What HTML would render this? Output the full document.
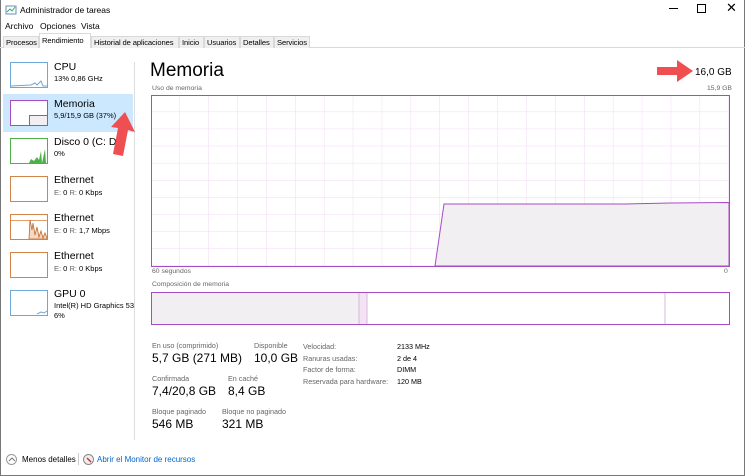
<!DOCTYPE html>
<html><head><meta charset="utf-8"><style>
*{margin:0;padding:0;box-sizing:border-box}
body{width:745px;height:476px;background:#fff;font-family:"Liberation Sans",sans-serif;position:relative;overflow:hidden;color:#000}
.a{position:absolute;white-space:nowrap}
.s{font-size:8.5px}
.g{color:#666}
.tab{position:absolute;top:36px;height:12px;border:1px solid #d9d9d9;border-bottom:none;background:#f0f0f0;font-size:7.6px;padding:1px 2px;color:#000;white-space:nowrap;overflow:hidden;letter-spacing:-.1px}
.th{position:absolute;left:10px;width:38px;height:26px;background:#fff}
.nm{font-size:10.5px}
.sub{font-size:7.5px}
.big{font-size:12px}
.lb{font-size:7.2px}
</style></head><body>
<div class="a" style="left:0;top:0;width:745px;height:476px;border:1px solid #777;border-top:none"></div>
<svg class="a" style="left:5px;top:4px" width="12" height="12"><rect x="1" y="2" width="10" height="8" fill="#fff" stroke="#6a8fb5"/><path d="M2 8 L5 5 L7 7 L10 3" stroke="#3a7" fill="none"/></svg>
<div class="a s" style="left:20px;top:5px">Administrador de tareas</div>
<div class="a" style="left:669px;top:8px;width:9px;height:1px;background:#000"></div>
<div class="a" style="left:697px;top:4px;width:9px;height:9px;border:1px solid #000"></div>
<div class="a" style="left:726px;top:0px;font-size:13px">✕</div>
<div class="a s" style="left:5px;top:21px">Archivo</div>
<div class="a s" style="left:40px;top:21px">Opciones</div>
<div class="a s" style="left:81px;top:21px">Vista</div>
<div class="a" style="left:0;top:47px;width:745px;height:1px;background:#d9d9d9"></div>
<div class="tab" style="left:3px;width:36px">Procesos</div>
<div class="tab" style="left:39px;top:33px;height:15px;width:52px;background:#fff;padding-top:2px">Rendimiento</div>
<div class="tab" style="left:91px;width:88px">Historial de aplicaciones</div>
<div class="tab" style="left:179px;width:25px">Inicio</div>
<div class="tab" style="left:204px;width:36px">Usuarios</div>
<div class="tab" style="left:240px;width:34px">Detalles</div>
<div class="tab" style="left:274px;width:36px">Servicios</div>
<div class="a" style="left:134px;top:62px;width:1px;height:378px;background:#ddd"></div>
<div class="a" style="left:3px;top:94px;width:130px;height:38px;background:#cce8ff"></div>
<div class="th" style="top:62px;border:1px solid #6ea8d8"><svg width="36" height="24"><path d="M0 23 L20 22 L24 20 L26 22 L30 18 L32 23 L36 23" stroke="#6ea8d8" fill="none"/></svg></div>
<div class="a nm" style="left:54px;top:61px">CPU</div><div class="a sub" style="left:54px;top:74px">13% 0,86 GHz</div>
<div class="th" style="top:100px;border:1px solid #a64cc3"><div style="position:absolute;left:18px;top:14px;width:19px;height:11px;border:1px solid #a64cc3;background:#f1eff2"></div></div>
<div class="a nm" style="left:54px;top:98px">Memoria</div><div class="a sub" style="left:54px;top:111px">5,9/15,9 GB (37%)</div>
<div class="th" style="top:138px;border:1px solid #4db14a"><svg width="36" height="24"><path d="M18 24 L20 20 L23 22 L26 18 L28 21 L30 12 L31 24 L34 10 L35 24Z" fill="#4db14a"/></svg></div>
<div class="a nm" style="left:54px;top:136px;width:80px;overflow:hidden">Disco 0 (C: D:)</div><div class="a sub" style="left:54px;top:149px">0%</div>
<div class="th" style="top:176px;border:1px solid #d0844a"></div>
<div class="a nm" style="left:54px;top:174px">Ethernet</div><div class="a sub" style="left:54px;top:188px"><span class="g">E:</span> 0 <span class="g">R:</span> 0 Kbps</div>
<div class="th" style="top:214px;border:1px solid #d0844a"><div style="position:absolute;left:0;top:5px;width:36px;height:1px;background:#e0a070"></div><svg width="36" height="24" style="position:absolute;left:0;top:0"><path d="M18 24 L19 5 L21 15 L22 8 L24 20 L26 12 L28 22 L30 16 L32 23 L34 18 L36 23 L36 24Z" fill="#f4d8c2" stroke="#c06a2a" stroke-width=".8"/></svg></div>
<div class="a nm" style="left:54px;top:212px">Ethernet</div><div class="a sub" style="left:54px;top:226px"><span class="g">E:</span> 0 <span class="g">R:</span> 1,7 Mbps</div>
<div class="th" style="top:252px;border:1px solid #d0844a"></div>
<div class="a nm" style="left:54px;top:250px">Ethernet</div><div class="a sub" style="left:54px;top:264px"><span class="g">E:</span> 0 <span class="g">R:</span> 0 Kbps</div>
<div class="th" style="top:290px;border:1px solid #6ea8d8"><svg width="36" height="24"><path d="M26 23 L30 21 L33 22 L36 20" stroke="#6ea8d8" fill="none"/></svg></div>
<div class="a nm" style="left:54px;top:288px">GPU 0</div><div class="a sub" style="left:54px;top:301px;width:80px;overflow:hidden">Intel(R) HD Graphics 530</div><div class="a sub" style="left:54px;top:311px">6%</div>
<svg class="a" style="left:105px;top:110px" width="30" height="50"><path d="M20 2 L30 22 L23 20 L18 46 L8 44 L13 18 L6 17 Z" fill="#f04f52"/></svg>
<div class="a" style="left:150px;top:60px;font-size:19px">Memoria</div>
<svg class="a" style="left:657px;top:60px" width="38" height="22"><path d="M0 7 L20 7 L20 0 L36 11 L20 22 L20 15 L0 15Z" fill="#f04f52"/></svg>
<div class="a" style="left:695px;top:67px;font-size:10px">16,0 GB</div>
<div class="a g" style="left:152px;top:85px;font-size:6.8px">Uso de memoria</div>
<div class="a g" style="left:707px;top:85px;font-size:6.8px">15,9 GB</div>
<svg class="a" style="left:151px;top:95px" width="579" height="172">
<defs><pattern id="p" width="28.9" height="17.1" patternUnits="userSpaceOnUse"><path d="M28.9 0 V17.1 M0 17.1 H28.9" stroke="#f1d9f3" fill="none"/></pattern></defs>
<rect x="0" y="0" width="579" height="172" fill="url(#p)"/>
<path d="M284 171 L293 109 L475 109 L520 108 L578 107.5 L578 171 Z" fill="#f1eff2" stroke="#a64cc3"/>
<rect x=".5" y=".5" width="578" height="171" fill="none" stroke="#a64cc3"/>
</svg>
<div class="a g" style="left:152px;top:268px;font-size:6.8px">60 segundos</div>
<div class="a g" style="left:724px;top:268px;font-size:6.8px">0</div>
<div class="a g" style="left:152px;top:281px;font-size:6.8px">Composición de memoria</div>
<svg class="a" style="left:151px;top:292px" width="579" height="33">
<rect x="0" y="0" width="208" height="33" fill="#f1eff2"/>
<rect x="208" y="0" width="8" height="33" fill="#f3e4f4" stroke="#d9b5e2"/>
<line x1="514" y1="0" x2="514" y2="33" stroke="#d9b5e2"/>
<rect x=".5" y=".5" width="578" height="32" fill="none" stroke="#a64cc3"/>
</svg>
<div class="a g lb" style="left:152px;top:341px">En uso (comprimido)</div>
<div class="a big" style="left:152px;top:351px">5,7 GB (271 MB)</div>
<div class="a g lb" style="left:254px;top:341px">Disponible</div>
<div class="a big" style="left:254px;top:351px">10,0 GB</div>
<div class="a g lb" style="left:152px;top:374px">Confirmada</div>
<div class="a big" style="left:152px;top:384px">7,4/20,8 GB</div>
<div class="a g lb" style="left:228px;top:374px">En caché</div>
<div class="a big" style="left:228px;top:384px">8,4 GB</div>
<div class="a g lb" style="left:152px;top:407px">Bloque paginado</div>
<div class="a big" style="left:152px;top:417px">546 MB</div>
<div class="a g lb" style="left:222px;top:407px">Bloque no paginado</div>
<div class="a big" style="left:222px;top:417px">321 MB</div>
<div class="a g lb" style="left:303px;top:341px;line-height:11.6px">Velocidad:<br>Ranuras usadas:<br>Factor de forma:<br>Reservada para hardware:</div>
<div class="a lb" style="left:397px;top:341px;line-height:11.6px">2133 MHz<br>2 de 4<br>DIMM<br>120 MB</div>
<div class="a" style="left:6px;top:454px;width:11px;height:11px;border:1px solid #999;border-radius:50%"></div>
<svg class="a" style="left:8px;top:457px" width="8" height="6"><path d="M1 4 L4 1 L7 4" stroke="#777" fill="none"/></svg>
<div class="a" style="left:22px;top:455px;font-size:8px">Menos detalles</div>
<div class="a" style="left:78px;top:453px;width:1px;height:12px;background:#ccc"></div>
<div class="a" style="left:83px;top:454px;width:11px;height:11px;border:1px solid #888;border-radius:50%;background:#eee"></div>
<svg class="a" style="left:85px;top:456px" width="8" height="8"><path d="M2 2 L6 6" stroke="#d22" stroke-width="1.3"/></svg>
<div class="a" style="left:97px;top:455px;font-size:8px;color:#0066cc">Abrir el Monitor de recursos</div>
</body></html>
